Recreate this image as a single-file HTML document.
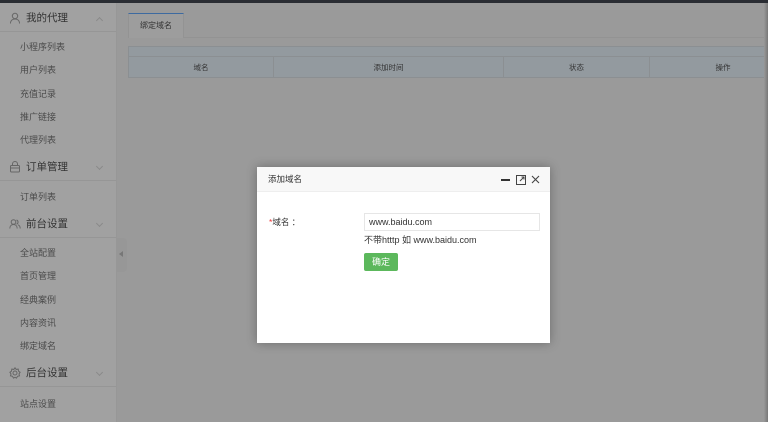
<!DOCTYPE html>
<html><head><meta charset="utf-8"><style>
*{margin:0;padding:0;box-sizing:border-box}
body{width:768px;height:422px;overflow:hidden;background:#9a9a9a;font-family:"Liberation Sans","Noto Sans CJK SC",sans-serif;position:relative}
.top{position:absolute;left:0;top:0;width:768px;height:3px;background:#2a2d33}
.side{position:absolute;left:0;top:3px;width:117px;height:419px;background:#a1a1a1;border-right:1px solid #979797}
.h{position:absolute;left:0;width:116px;height:28px;border-bottom:1px solid #969696;font-size:10.5px;color:#333;padding-left:26px;line-height:28px}
.h svg{position:absolute;left:9px;top:8px}
.h .ar{position:absolute;left:97px;top:11px;width:5px;height:5px;border-right:1px solid #8a8a8a;border-bottom:1px solid #8a8a8a;transform:rotate(45deg)}
.h .up{transform:rotate(-135deg);top:14px}
.i{position:absolute;left:20px;font-size:9px;color:#4a4a4a}
.tab{position:absolute;left:128px;top:13px;width:56px;height:25px;border-top:1px solid #3d6aa0;border-left:1px solid #939393;border-right:1px solid #939393;background:#9d9d9d;font-size:8px;color:#333;line-height:24px;text-align:center}
.tline{position:absolute;left:184px;top:37px;width:584px;height:1px;background:#939393}
.tbl{position:absolute;left:128px;top:46px;width:640px;height:32px;background:#939a9f;border:1px solid #8b8f92}
.tbl .r1{height:10px;border-bottom:1px solid #8b8f92}
.c{position:absolute;top:10px;height:21px;line-height:21px;text-align:center;font-size:7.5px;color:#333;border-right:1px solid #8b8f92}
.edge{position:absolute;right:0;top:3px;width:4px;height:419px;background:linear-gradient(to right,#999,#777)}
.col{position:absolute;left:117px;top:238px;width:10px;height:34px;background:#979797;border-radius:0 4px 4px 0}
.col:after{content:"";position:absolute;left:2px;top:13px;border:3px solid transparent;border-right:4px solid #777;border-left:0}
.dlg{position:absolute;left:257px;top:167px;width:293px;height:176px;background:#fff;box-shadow:0 0 10px rgba(0,0,0,.3)}
.dh{height:25px;background:#f8f8f8;border-bottom:1px solid #eee;font-size:8.5px;color:#333;line-height:25px;padding-left:11px;position:relative}
.lbl{position:absolute;left:12px;top:49px;font-size:8.5px;color:#333}
.inp{position:absolute;left:107px;top:46px;width:176px;height:18px;border:1px solid #e6e6e6;font-size:9px;color:#333;line-height:16px;padding-left:4px}
.tip{position:absolute;left:107px;top:66px;font-size:9px;color:#333}
.btn{position:absolute;left:107px;top:86px;width:34px;height:18px;background:#5cb85c;border-radius:2px;color:#fff;font-size:9px;line-height:18px;text-align:center}
</style></head><body>
<div class="top"></div>
<div class="side">
 <div class="h" style="top:1px"><svg width="12" height="12" viewBox="0 0 12 12" fill="none" stroke="#666" stroke-width="1"><circle cx="6" cy="4" r="2.7"/><path d="M1.5 11.5c0-3 2-4.5 4.5-4.5s4.5 1.5 4.5 4.5"/></svg>我的代理<span class="ar up"></span></div>
 <div class="i" style="top:37px">小程序列表</div>
 <div class="i" style="top:60px">用户列表</div>
 <div class="i" style="top:84px">充值记录</div>
 <div class="i" style="top:107px">推广链接</div>
 <div class="i" style="top:130px">代理列表</div>
 <div class="h" style="top:150px"><svg width="12" height="12" viewBox="0 0 12 12" fill="none" stroke="#666" stroke-width="1"><rect x="1.5" y="4.5" width="9" height="6.5" rx="1"/><path d="M3.5 4.5V3a2.5 2.5 0 0 1 5 0v1.5M1.5 7h9"/></svg>订单管理<span class="ar"></span></div>
 <div class="i" style="top:187px">订单列表</div>
 <div class="h" style="top:207px"><svg width="12" height="12" viewBox="0 0 12 12" fill="none" stroke="#666" stroke-width="1"><circle cx="4.5" cy="4" r="2.3"/><path d="M0.8 10.5c0-2.5 1.6-4 3.7-4s3.7 1.5 3.7 4M7.5 2a2.2 2.2 0 0 1 0 4.2M9 6.8c1.3.5 2.2 1.8 2.2 3.7"/></svg>前台设置<span class="ar"></span></div>
 <div class="i" style="top:243px">全站配置</div>
 <div class="i" style="top:266px">首页管理</div>
 <div class="i" style="top:290px">经典案例</div>
 <div class="i" style="top:313px">内容资讯</div>
 <div class="i" style="top:336px">绑定域名</div>
 <div class="h" style="top:356px"><svg width="12" height="12" viewBox="0 0 12 12" fill="none" stroke="#666" stroke-width="1"><circle cx="6" cy="6" r="2"/><path d="M6 .8l1.2 1.6 2-.3.3 2 1.6 1.2-1.1 1.7.5 1.9-2 .4-1 1.8L6 10.3l-1.5.8-1-1.8-2-.4.5-1.9L.9 5.3l1.6-1.2.3-2 2 .3z"/></svg>后台设置<span class="ar"></span></div>
 <div class="i" style="top:394px">站点设置</div>
</div>
<div class="col"></div>
<div class="tab">绑定域名</div>
<div class="tline"></div>
<div class="tbl"><div class="r1"></div>
 <div class="c" style="left:0;width:145px">域名</div>
 <div class="c" style="left:145px;width:230px">添加时间</div>
 <div class="c" style="left:375px;width:146px">状态</div>
 <div class="c" style="left:521px;width:146px;border-right:0">操作</div>
</div>
<div class="edge"></div>
<div class="dlg">
 <div class="dh">添加域名
  <span style="position:absolute;left:244px;top:12px;width:9px;height:2px;background:#333"></span>
  <svg style="position:absolute;left:259px;top:8px" width="10" height="10" viewBox="0 0 10 10" fill="none" stroke="#444" stroke-width="1"><rect x=".5" y=".5" width="9" height="9"/><path d="M4 6L8 2M5.5 2H8v2.5"/></svg>
  <svg style="position:absolute;left:274px;top:8px" width="9" height="9" viewBox="0 0 9 9" stroke="#444" stroke-width="1.1"><path d="M1 1l7 7M8 1L1 8"/></svg>
 </div>
 <div class="lbl"><span style="color:#e33">*</span>域名 ：</div>
 <div class="inp">www.baidu.com</div>
 <div class="tip">不带htttp 如 www.baidu.com</div>
 <div class="btn">确定</div>
</div>
</body></html>
